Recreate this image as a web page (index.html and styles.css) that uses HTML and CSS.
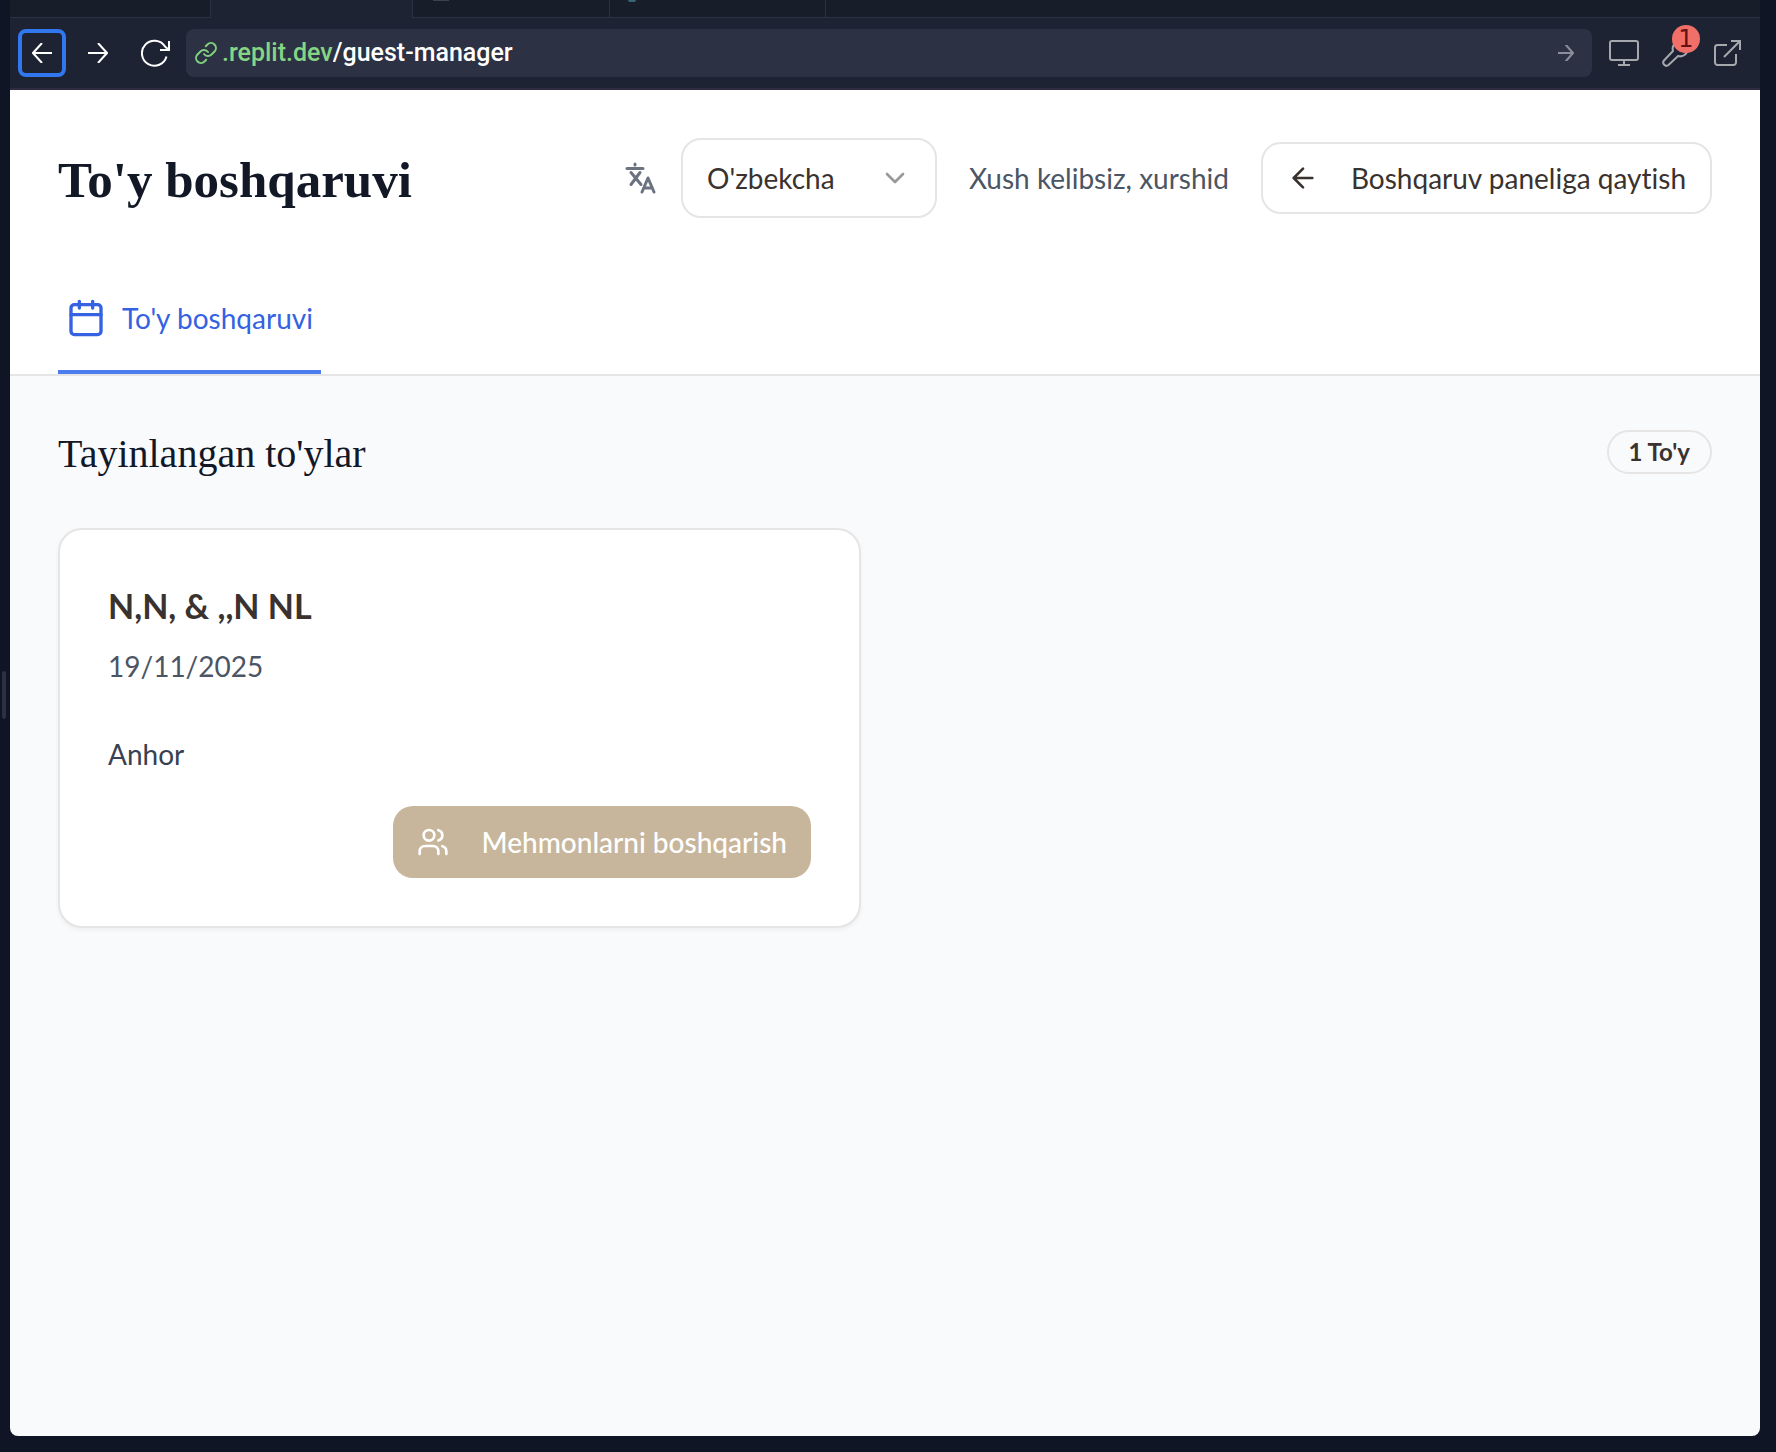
FILE: index.html
```html
<!DOCTYPE html>
<html lang="uz">
<head>
<meta charset="utf-8">
<meta name="viewport" content="width=device-width, initial-scale=1">
<title>To'y boshqaruvi</title>
<link rel="stylesheet" href="styles.css">
</head>
<body>
<div class="gutter"><span class="handle"></span></div>
<div class="pane">
  <div class="tabstrip">
    <span class="wtab wtab-first"></span>
    <span class="wtab wtab-active"></span>
    <span class="wtab wtab-third"><i class="mark mark-grey"></i></span>
    <span class="wtab wtab-fourth"><i class="mark mark-teal"></i></span>
    <span class="wtab wtab-rest"></span>
  </div>
  <div class="toolbar">
    <button class="tool tool-focus" type="button" aria-label="Back"><svg width="20" height="20" viewBox="0 0 20 20"><path d="M20 10H1M10 0 1 10l9 10"/></svg></button>
    <button class="tool" type="button" aria-label="Forward"><svg width="20" height="20" viewBox="0 0 20 20"><path d="M0 10h19M10 0l9 10-9 10"/></svg></button>
    <button class="tool tool-reload" type="button" aria-label="Reload"><svg width="30" height="28" viewBox="0 0 30 28"><path d="M25.500 17.500A12.500 12.500 0 1 1 24 7.500l4 3.500M28 2v9h-9"/></svg></button>
    <form class="address">
      <svg class="link-icon" width="24" height="24" viewBox="0 0 24 24"><path d="M10 13a5 5 0 0 0 7.540.540l3-3a5 5 0 0 0-7.070-7.070l-1.720 1.710"/><path d="M14 11a5 5 0 0 0-7.540-.540l-3 3a5 5 0 0 0 7.070 7.070l1.710-1.710"/></svg>
      <label class="host" for="path">.replit.dev</label>
      <input class="path" id="path" type="text" value="/guest-manager">
      <button class="go" type="button" aria-label="Go"><svg width="16" height="16" viewBox="0 0 16 16"><path d="M0 8h15M8 0l7 8-7 8"/></svg></button>
    </form>
    <button class="tool tool-grey tool-screen" type="button" aria-label="Devices"><svg width="30" height="28" viewBox="0 0 30 28"><rect x="1" y="2" width="28" height="19" rx="2"/><path d="M15 21v5M9 26h12"/></svg></button>
    <button class="tool tool-grey tool-wrench" type="button" aria-label="Developer tools"><svg width="28" height="28" viewBox="0 0 28 28"><path d="M19 2C13 2 9.500 7 11 12L2 21.500a3.200 3.200 0 0 0 4.500 4.500L16 17c5 1.500 10-2 10-8l-4 3.500-4-1-1-4z"/></svg><span class="count">1</span></button>
    <button class="tool tool-grey tool-open" type="button" aria-label="Open in new tab"><svg width="28" height="28" viewBox="0 0 28 28"><path d="M13 6H3.500A2.500 2.500 0 0 0 1 8.500v15A2.500 2.500 0 0 0 3.500 26h16a2.500 2.500 0 0 0 2.500-2.500V15M17 2h9v9M26 2 10 18"/></svg></button>
  </div>
  <div class="app">
    <header class="header">
      <div class="topbar">
        <h1 class="brand">To'y boshqaruvi</h1>
        <div class="actions">
          <div class="language">
            <svg class="translate" width="32" height="32" viewBox="0 0 32 32"><path d="M2 6.500h16M10 2v1M6 10.500l10 12M15 10.500 6 22.500M17 30l6-14 6 14M19.500 26h7"/></svg>
            <div class="select-wrap">
              <select class="select" aria-label="Til"><option>O'zbekcha</option></select>
              <svg class="chevron" width="32" height="32" viewBox="0 0 24 24"><path d="m6 9 6 6 6-6"/></svg>
            </div>
          </div>
          <span class="welcome">Xush kelibsiz, xurshid</span>
          <button class="btn btn-outline" type="button"><svg width="32" height="32" viewBox="0 0 24 24"><path d="m12 19-7-7 7-7M19 12H5"/></svg>Boshqaruv paneliga qaytish</button>
        </div>
      </div>
      <nav class="nav">
        <a class="nav-item" href="#"><svg width="40" height="40" viewBox="0 0 24 24"><path d="M8 2v4M16 2v4M3 10h18"/><rect x="3" y="4" width="18" height="18" rx="2"/></svg>To'y boshqaruvi</a>
      </nav>
    </header>
    <main class="main">
      <div class="section-head">
        <h2 class="section-title">Tayinlangan to'ylar</h2>
        <span class="badge">1 To'y</span>
      </div>
      <div class="grid">
        <article class="card">
          <h3 class="card-title">N,N, &amp; ,,N NL</h3>
          <p class="date">19/11/2025</p>
          <p class="venue">Anhor</p>
          <div class="card-actions">
            <button class="btn btn-primary" type="button"><svg width="32" height="32" viewBox="0 0 24 24"><path d="M16 21v-2a4 4 0 0 0-4-4H6a4 4 0 0 0-4 4v2"/><circle cx="9" cy="7" r="4"/><path d="M22 21v-2a4 4 0 0 0-3-3.870M16 3.130a4 4 0 0 1 0 7.750"/></svg>Mehmonlarni boshqarish</button>
          </div>
        </article>
      </div>
    </main>
  </div>
</div>
</body>
</html>
```
FILE: styles.css
```css
* { box-sizing: border-box; }
body {
  margin: 0;
  min-height: 100vh;
  display: flex;
  background: #0f1524;
  font-family: Lato, "Liberation Sans", sans-serif;
  font-size: 28px;
  line-height: 40px;
  font-variant-ligatures: none;
  color: #3a322e;
}
h1, h2, h3, p { margin: 0; }
button, input, select { font: inherit; font-variant-ligatures: none; color: inherit; margin: 0; }
button { cursor: pointer; }
svg { flex: none; fill: none; stroke: currentColor; stroke-width: 2; stroke-linecap: round; stroke-linejoin: round; }

.gutter { width: 10px; flex: none; display: flex; flex-direction: column; align-items: center; justify-content: center; padding-bottom: 62px; }
.handle { width: 4px; height: 48px; margin-right: 2px; border-radius: 2px; background: #2b3042; }
.pane { flex: 1; min-width: 0; display: flex; flex-direction: column; margin: 0 16px 16px 0; }

.tabstrip { display: flex; height: 18px; background: #1e2333; }
.wtab { border: 0 solid #2b3042; border-bottom-width: 1px; background: #181d2a; }
.wtab-first { width: 201px; border-right-width: 1px; }
.wtab-active { width: 201px; border-bottom-width: 0; background: #1e2333; }
.wtab-third { width: 197px; border-left-width: 1px; padding-left: 20px; }
.wtab-fourth { width: 216px; border-left-width: 1px; padding-left: 18px; }
.wtab-rest { flex: 1; border-left-width: 1px; }
.mark { display: block; }
.mark-grey { width: 16px; height: 1px; background: #3b4252; }
.mark-teal { width: 8px; height: 2px; border-radius: 0 0 4px 4px; background: #3a6470; }

.toolbar { display: flex; align-items: center; height: 72px; padding: 0 8px; background: #1e2333; border-bottom: 2px solid #2f2c42; font-family: Roboto, "Noto Sans", sans-serif; }
.tool { position: relative; flex: none; width: 48px; height: 48px; padding: 0; display: flex; align-items: center; justify-content: center; border: 0; border-radius: 8px; background: none; color: #fff; }
.tool svg { stroke-linecap: butt; stroke-linejoin: miter; }
.tool-focus { border: 4px solid #3178f0; margin-right: 8px; }
.tool-reload { margin: 0 6px 0 10px; }
.tool-grey { color: #a5a8ad; }
.tool-screen { margin-left: 8px; }
.tool-wrench { margin-left: 4px; }
.tool-open { margin-left: 4px; }
.count { position: absolute; left: 20px; top: -4px; width: 28px; height: 28px; border-radius: 50%; background: #f07069; color: #66100f; font-family: "DejaVu Sans", sans-serif; font-size: 24px; line-height: 28px; text-align: center; }
.address { flex: 1; min-width: 0; height: 48px; display: flex; align-items: center; padding: 0 16px 0 8px; border-radius: 8px; background: #2c3143; color: #fff; font-size: 25px; font-weight: 500; }
.link-icon { margin-right: 4px; color: #80d080; stroke-width: 2; }
.host { color: #85d585; }
.path { flex: 1; min-width: 0; border: 0; padding: 0; background: none; outline: 0; }
.go { display: flex; padding: 2px; border: 0; background: none; color: #8b8f9a; }

.app { flex: 1; display: flex; flex-direction: column; overflow: hidden; border-radius: 0 0 8px 8px; background: #f9fafc; }
.header { background: #fff; border-bottom: 2px solid #e5e5e5; padding: 0 48px; }
.topbar { display: flex; align-items: center; justify-content: space-between; padding: 48px 0; }
.brand { padding-top: 4px; font-family: "Liberation Serif", serif; font-size: 51px; line-height: 64px; font-weight: 700; color: #121826; }
.actions { display: flex; align-items: center; gap: 32px; }
.language { display: flex; align-items: center; gap: 24px; }
.translate { color: #6b7280; stroke-width: 3; }
.select-wrap { display: grid; align-items: center; width: 256px; }
.select { grid-area: 1 / 1; appearance: none; height: 80px; padding: 0 24px; border: 2px solid #e5e5e5; border-radius: 20px; background: #fff; }
.chevron { grid-area: 1 / 1; justify-self: end; margin-right: 26px; color: #9c9896; pointer-events: none; }
.welcome { color: #4b5563; }
.btn { display: inline-flex; align-items: center; gap: 32px; height: 72px; padding: 0 24px; border-radius: 20px; border: 0; background: #fff; white-space: nowrap; }
.btn-outline { border: 2px solid #e5e5e5; }
.btn-primary { background: #c8b69c; color: #fff; font-weight: 500; }
.nav { display: flex; }
.nav-item { display: flex; align-items: center; gap: 16px; height: 108px; padding: 0 8px; border-bottom: 4px solid #4c7eed; color: #3462e2; text-decoration: none; }

.main { padding: 48px; }
.section-head { display: flex; align-items: center; justify-content: space-between; padding-bottom: 48px; }
.section-title { padding-top: 4px; font-family: "Liberation Serif", serif; font-size: 40px; line-height: 52px; font-weight: 400; color: #121826; }
.badge { padding: 0 20px; border: 2px solid #e7e5e4; border-radius: 22px; font-size: 24px; font-weight: 700; }
.grid { display: grid; grid-template-columns: 1fr 1fr; gap: 48px; }
.card { padding: 48px; border: 2px solid #e5e5e5; border-radius: 24px; background: #fff; box-shadow: 0 2px 4px rgba(0, 0, 0, .05); }
.card-title { font-size: 34px; line-height: 56px; font-weight: 700; }
.date { margin-top: 12px; color: #4b5563; }
.venue { margin-top: 48px; color: #374151; }
.card-actions { display: flex; justify-content: flex-end; margin-top: 32px; }
```
